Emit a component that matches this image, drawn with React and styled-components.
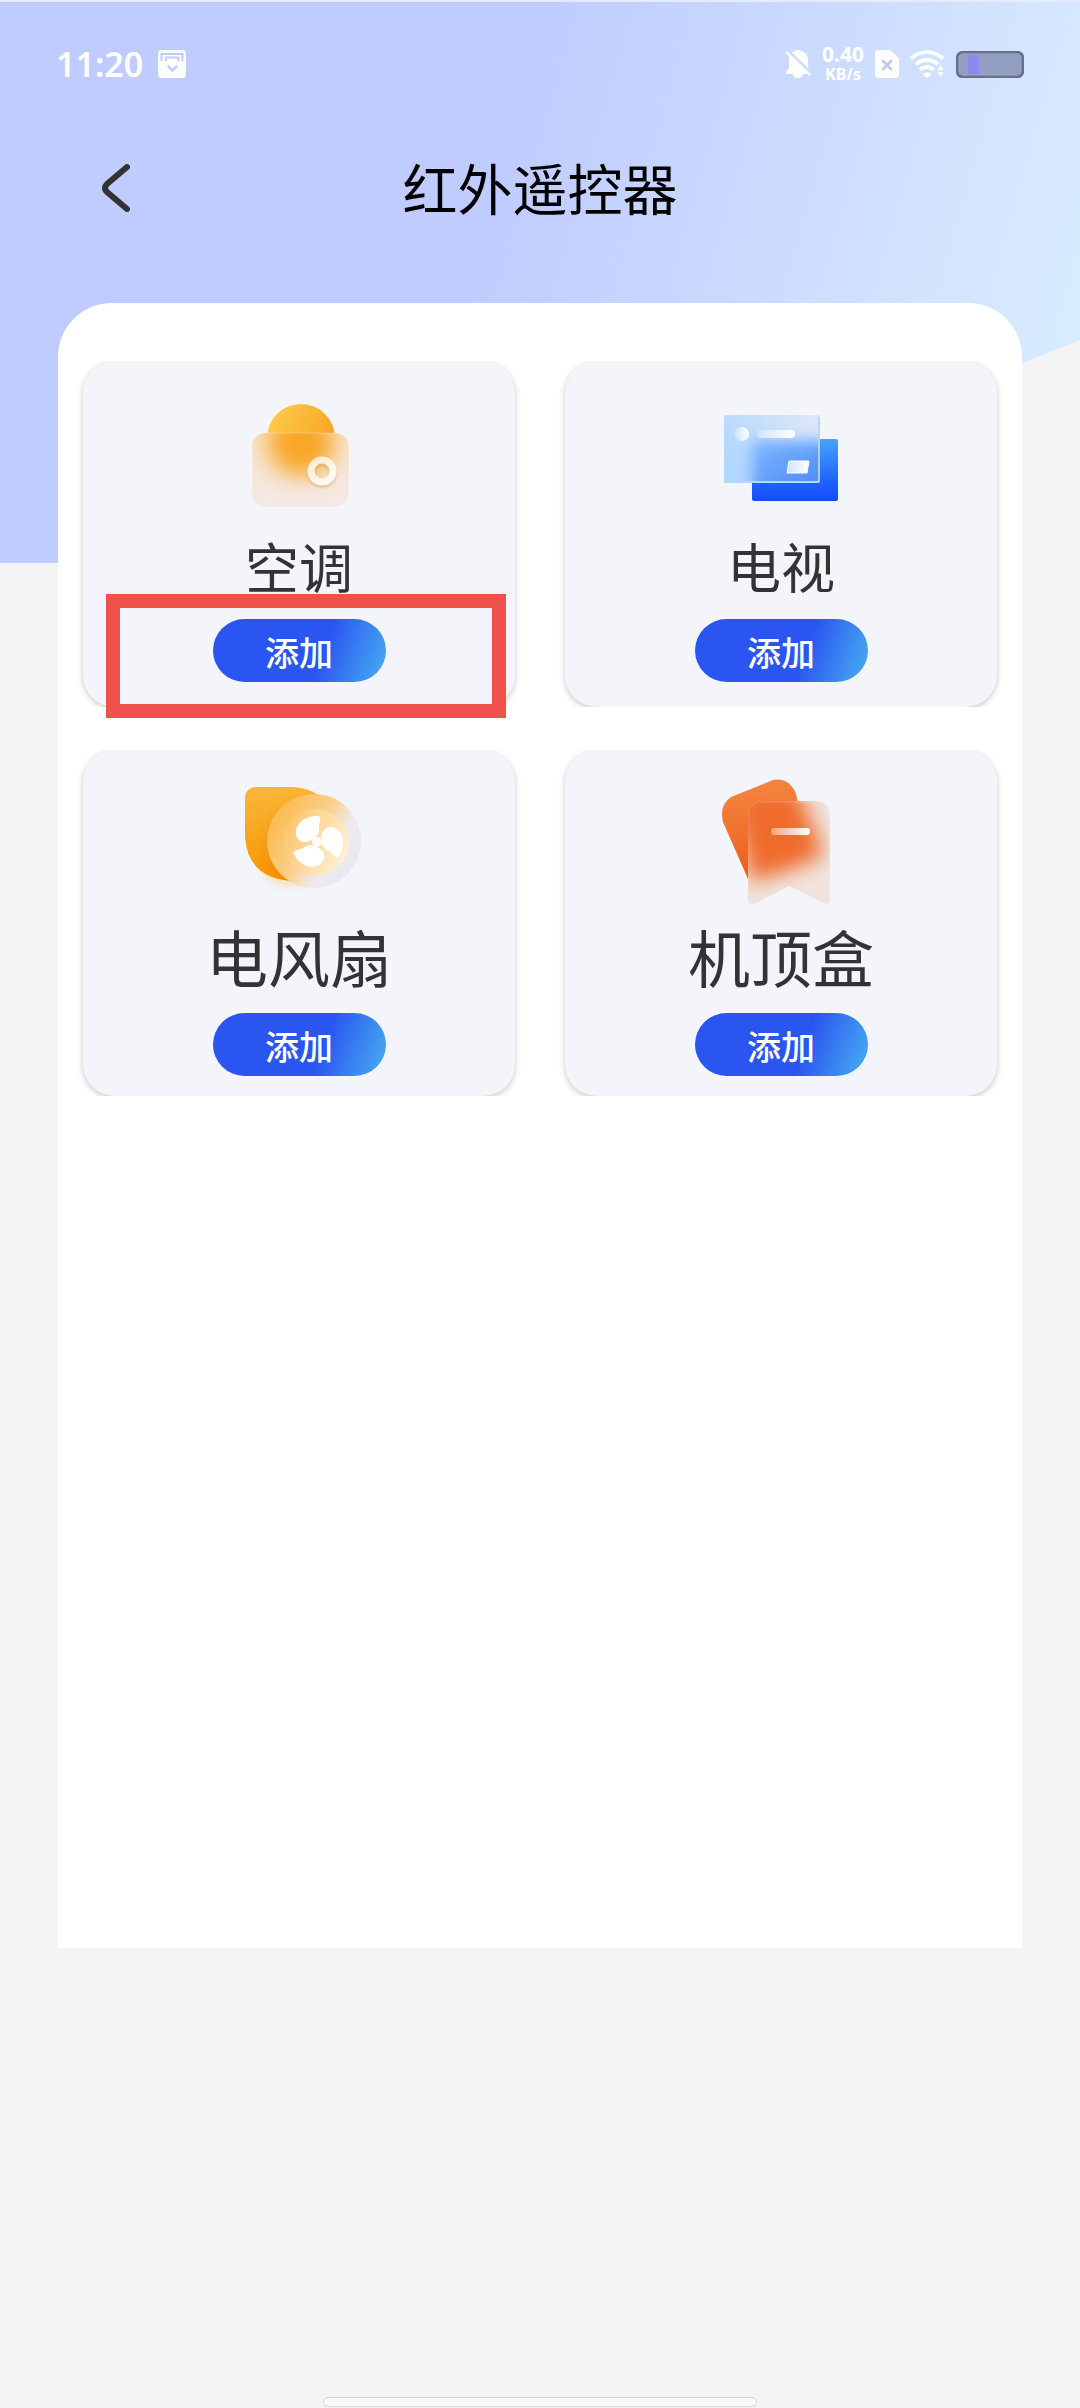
import React from "react";
import styled, { createGlobalStyle } from "styled-components";

const Global = createGlobalStyle`
  * { box-sizing: border-box; }
  body { margin: 0; background: #f4f4f4; }
  button { font-family: inherit; border: 0; padding: 0; cursor: pointer; }
`;

const Screen = styled.div`
  position: relative;
  display: flex;
  flex-direction: column;
  min-height: 100vh;
  overflow: hidden;
  font-family: "Noto Sans", "Noto Sans CJK SC", sans-serif;
  background: #f4f4f4;
`;

const Backdrop = styled.svg`
  position: absolute;
  top: 0;
  left: 0;
  width: 100%;
  height: 565px;
`;

const StatusBar = styled.div`
  position: relative;
  display: flex;
  align-items: center;
  justify-content: space-between;
  height: 128px;
  padding: 0 56px;
  color: #fff;
`;

const StatusGroup = styled.div`
  display: flex;
  align-items: center;
  gap: ${(p) => p.$gap}px;
`;

const Clock = styled.time`
  font-size: 34px;
  font-weight: 600;
  line-height: 40px;
`;

const Speed = styled.div`
  display: flex;
  flex-direction: column;
  align-items: center;
  font-size: 21px;
  font-weight: 700;
  line-height: 20px;
`;

const SpeedUnit = styled.span`
  font-size: 16px;
`;

const Header = styled.header`
  position: relative;
  display: grid;
  grid-template-columns: 118px 1fr 118px;
  align-items: center;
  height: 120px;
  margin-bottom: 55px;
`;

const BackButton = styled.button`
  display: flex;
  justify-content: flex-end;
  align-items: center;
  width: 144px;
  height: 80px;
  padding-right: 14px;
  background: none;
`;

const Title = styled.h1`
  margin: 0;
  padding-top: 2px;
  color: #000;
  font-size: 55px;
  font-weight: 400;
  line-height: 72px;
  text-align: center;
`;

const Panel = styled.main`
  position: relative;
  min-height: 1645px;
  margin: 0 58px;
  padding-top: 58px;
  background: #fff;
  border-radius: 54px 54px 0 0;
`;

const DeviceGrid = styled.ul`
  display: grid;
  grid-template-columns: 1fr 1fr;
  row-gap: 43px;
  margin: 0;
  padding: 0;
  list-style: none;
`;

const DeviceCell = styled.li`
  position: relative;
`;

const CardClip = styled.div`
  padding: 0 25px;
  overflow: hidden;
`;

const Card = styled.article`
  display: flex;
  flex-direction: column;
  align-items: center;
  height: 346px;
  padding-top: 20px;
  border-radius: 32px;
  background: #f3f5fb;
  box-shadow: 0 2px 6px rgba(0, 0, 0, 0.22);
`;

const DeviceArt = styled.svg`
  display: block;
  flex: none;
  width: 150px;
  height: 150px;
`;

const DeviceName = styled.h2`
  margin: 0 0 16px;
  padding-top: 2px;
  color: #333;
  font-size: ${(p) => (p.$large ? 62 : 54)}px;
  font-weight: 400;
  line-height: ${(p) => (p.$large ? 75 : 70)}px;
`;

const AddButton = styled.button`
  width: 173px;
  height: 63px;
  padding-top: 4px;
  border-radius: 32px;
  background: linear-gradient(110deg, #2a55f0 62%, #45a6f2 96%);
  color: #fff;
  font-size: 34px;
  font-weight: 500;
  line-height: 58px;
`;

const Highlight = styled.div`
  position: absolute;
  top: 233px;
  right: 34px;
  left: 48px;
  height: 124px;
  border: 14px solid #f0524b;
  pointer-events: none;
`;

const HomeIndicator = styled.div`
  width: 434px;
  height: 10px;
  margin: auto auto 1px;
  border: 1px solid #d8d8d8;
  border-radius: 5px;
  background: #fafafa;
`;

function Wave() {
  return (
    <Backdrop viewBox="0 0 1080 565" preserveAspectRatio="none" aria-hidden="true">
      <defs>
        <linearGradient id="sky" gradientUnits="userSpaceOnUse" x1="480" y1="240" x2="1050" y2="400">
          <stop offset="0" stopColor="#c0ccff" />
          <stop offset="1" stopColor="#d8ecff" />
        </linearGradient>
      </defs>
      <path d="M0 0H1080V340C850 430 640 563 60 563H0Z" fill="url(#sky)" />
      <path d="M0 0H1080V2H0Z" fill="#e6ecff" />
    </Backdrop>
  );
}

function MailIcon() {
  return (
    <svg width="28" height="28" viewBox="0 0 28 28" aria-hidden="true">
      <rect width="28" height="28" rx="4" fill="#fff" />
      <path d="M3.5 11V4H24.500V11M8 11V7.500H20.500V11" fill="none" stroke="#c0ccff" strokeWidth="2" />
      <path d="M10.500 16.500L14.500 20.500L18.500 16.500" fill="none" stroke="#c0ccff" strokeWidth="2.500" strokeLinecap="round" strokeLinejoin="round" />
    </svg>
  );
}

function MutedBell() {
  return (
    <svg width="26" height="30" viewBox="0 0 26 30" aria-hidden="true">
      <path d="M13 1a3 3 0 0 1 3 1c5 1 7 5 7 10v6l2 5v2H1v-2l3-4v-7c0-5 2-9 6-10a3 3 0 0 1 3-1zM8 25h10a5 4 0 0 1-10 0z" fill="#fff" />
      <path d="M1 0L27 25" stroke="#cddbff" strokeWidth="3" />
      <path d="M1 3L25 26" stroke="#fff" strokeWidth="2.400" />
    </svg>
  );
}

function SimOff() {
  return (
    <svg width="24" height="28" viewBox="0 0 24 28" aria-hidden="true">
      <path d="M4 0H15L24 8V24a4 4 0 0 1-4 4H4a4 4 0 0 1-4-4V4a4 4 0 0 1 4-4z" fill="#fff" />
      <path d="M8 11L16 19M16 11L8 19" stroke="#bccde8" strokeWidth="2.600" strokeLinecap="round" />
    </svg>
  );
}

function Wifi() {
  return (
    <svg width="35" height="28" viewBox="0 0 35 28" aria-hidden="true">
      <g fill="none" stroke="#fff" strokeWidth="3.800">
        <path d="M1 8.500C10 0 24 0 33 8.500" />
        <path d="M6 14.500C12 8.500 22 8.500 28 14.500" />
        <path d="M10 20C14 16 20 16 24 20" />
      </g>
      <path d="M12.500 24C15 22 19 22 21.500 24L17 28ZM27.500 20L30.500 15L33.500 20ZM27.500 22L30.500 27L33.500 22Z" fill="#fff" />
    </svg>
  );
}

function Battery() {
  return (
    <svg width="68" height="27" viewBox="0 0 68 27" aria-hidden="true">
      <rect x="1" y="1" width="66" height="25" rx="6" fill="#929fc0" stroke="#667089" strokeWidth="2.500" />
      <rect x="12" y="4" width="11" height="19" rx="2" fill="#8d88ee" />
    </svg>
  );
}

function AirConditionerArt() {
  return (
    <DeviceArt viewBox="0 0 150 150" aria-hidden="true">
      <defs>
        <linearGradient id="acSun" x1="0" y1="0" x2="1" y2="0.600">
          <stop offset="0" stopColor="#fdd050" />
          <stop offset="1" stopColor="#f9a01f" />
        </linearGradient>
        <linearGradient id="acBox" x1="0" y1="0" x2="0" y2="1">
          <stop offset="0" stopColor="#f8e4ca" />
          <stop offset="1" stopColor="#f3e9e6" />
        </linearGradient>
        <linearGradient id="acRing" x1="0" y1="0" x2="1" y2="1">
          <stop offset="0" stopColor="#fdebd0" />
          <stop offset="1" stopColor="#fffdfa" />
        </linearGradient>
        <filter id="acBlur" x="-50%" y="-50%" width="200%" height="200%" colorInterpolationFilters="sRGB"><feGaussianBlur stdDeviation="11" /></filter>
        <filter id="acShade" x="-50%" y="-50%" width="200%" height="200%"><feDropShadow dx="0" dy="2" stdDeviation="1.500" floodColor="#c98a3c" floodOpacity="0.450" /></filter>
        <clipPath id="acClip"><rect x="28" y="52" width="97" height="74" rx="13" /></clipPath>
      </defs>
      <circle cx="77" cy="57" r="34" fill="url(#acSun)" />
      <rect x="28" y="52" width="97" height="74" rx="13" fill="url(#acBox)" />
      <g clipPath="url(#acClip)">
        <circle cx="77" cy="62" r="33" fill="#f9a628" filter="url(#acBlur)" />
      </g>
      <rect x="28" y="52" width="97" height="74" rx="13" fill="none" stroke="#fff" strokeOpacity="0.250" />
      <circle cx="98" cy="90" r="11" fill="none" stroke="url(#acRing)" strokeWidth="7" filter="url(#acShade)" />
    </DeviceArt>
  );
}

function TelevisionArt() {
  return (
    <DeviceArt viewBox="0 0 150 150" aria-hidden="true">
      <defs>
        <linearGradient id="tvBack" x1="0" y1="0" x2="0" y2="1">
          <stop offset="0" stopColor="#48a3fc" />
          <stop offset="0.700" stopColor="#1e62fd" />
          <stop offset="1" stopColor="#144bfa" />
        </linearGradient>
        <linearGradient id="tvFront" x1="0" y1="0.500" x2="1" y2="0">
          <stop offset="0" stopColor="#b2d7ff" />
          <stop offset="1" stopColor="#e0e8f8" />
        </linearGradient>
        <linearGradient id="tvShine" x1="0" y1="0" x2="1" y2="0">
          <stop offset="0" stopColor="#cfe4ff" />
          <stop offset="1" stopColor="#fff" />
        </linearGradient>
        <linearGradient id="tvGlow" x1="0" y1="0" x2="0.600" y2="0.700">
          <stop offset="0" stopColor="#7db8ff" />
          <stop offset="1" stopColor="#5590fa" />
        </linearGradient>
        <filter id="tvBlur" x="-40%" y="-40%" width="180%" height="180%" colorInterpolationFilters="sRGB"><feGaussianBlur stdDeviation="7" /></filter>
        <clipPath id="tvClip"><rect x="18" y="34" width="96" height="68" rx="2" /></clipPath>
      </defs>
      <rect x="46" y="58" width="86" height="62" rx="2" fill="url(#tvBack)" />
      <rect x="18" y="34" width="96" height="68" rx="2" fill="url(#tvFront)" />
      <g clipPath="url(#tvClip)">
        <rect x="46" y="60" width="86" height="62" fill="url(#tvGlow)" filter="url(#tvBlur)" />
      </g>
      <path d="M18 101H111a2 2 0 0 0 2-2V36" fill="none" stroke="#b4d8ff" strokeWidth="1.800" />
      <circle cx="36" cy="53" r="7" fill="url(#tvShine)" />
      <rect x="51" y="49" width="38" height="8" rx="4" fill="url(#tvShine)" />
      <path d="M83 80H103L101 92H81Z" fill="url(#tvShine)" stroke="#fff" strokeWidth="1" strokeLinejoin="round" />
    </DeviceArt>
  );
}

function FanArt() {
  return (
    <DeviceArt viewBox="0 0 150 150" aria-hidden="true">
      <defs>
        <linearGradient id="fanLeaf" x1="0.400" y1="0" x2="0.500" y2="1">
          <stop offset="0" stopColor="#fbb638" />
          <stop offset="1" stopColor="#f59300" />
        </linearGradient>
        <linearGradient id="fanDisc" gradientUnits="userSpaceOnUse" x1="54" y1="50" x2="120" y2="90">
          <stop offset="0" stopColor="#fbbd55" />
          <stop offset="0.500" stopColor="#fad08c" />
          <stop offset="0.800" stopColor="#efe9e9" />
          <stop offset="1" stopColor="#ebe9f0" />
        </linearGradient>
        <linearGradient id="fanInner" x1="0" y1="0.300" x2="1" y2="0.700">
          <stop offset="0" stopColor="#fcc468" />
          <stop offset="1" stopColor="#fff1dc" />
        </linearGradient>
        <filter id="fanGlow" x="-50%" y="-50%" width="200%" height="200%" colorInterpolationFilters="sRGB"><feGaussianBlur stdDeviation="5" /></filter>
        <path id="fanBlade" d="M-3 -4C-10 3 -20 1 -21 -8C-22 -20 -10 -27 2 -26C5 -24 2 -19 2 -15C2 -10 2 -7 -3 -4Z" />
        <clipPath id="fanClip"><path d="M33 17H74Q119 19 119 64Q119 111 72 111Q24 110 21 67V29Q21 17 33 17Z" /></clipPath>
      </defs>
      <ellipse cx="66" cy="98" rx="28" ry="17" fill="#ffc36a" opacity="0.500" filter="url(#fanGlow)" />
      <path d="M33 17H68Q84 17 97 27L72 111Q24 110 21 67V29Q21 17 33 17Z" fill="url(#fanLeaf)" />
      <g clipPath="url(#fanClip)"><circle cx="87" cy="75" r="44" fill="#e57e00" opacity="0.500" filter="url(#fanGlow)" /></g>
      <circle cx="90" cy="71" r="47" fill="url(#fanDisc)" />
      <circle cx="92" cy="72" r="33" fill="url(#fanInner)" />
      <g fill="#fff">
        <use href="#fanBlade" transform="translate(93 72)" />
        <use href="#fanBlade" transform="translate(93 72) rotate(120)" />
        <use href="#fanBlade" transform="translate(93 72) rotate(240)" />
        <circle cx="93" cy="72" r="5" />
      </g>
    </DeviceArt>
  );
}

function SetTopBoxArt() {
  return (
    <DeviceArt viewBox="0 0 150 150" aria-hidden="true">
      <defs>
        <linearGradient id="stbBack" x1="0.400" y1="0" x2="0.500" y2="1">
          <stop offset="0" stopColor="#f48641" />
          <stop offset="1" stopColor="#ee5c1a" />
        </linearGradient>
        <linearGradient id="stbLine" x1="0" y1="0" x2="1" y2="0">
          <stop offset="0" stopColor="#f7a479" />
          <stop offset="1" stopColor="#fff" />
        </linearGradient>
        <filter id="stbBlur" x="-50%" y="-50%" width="200%" height="200%" colorInterpolationFilters="sRGB"><feGaussianBlur stdDeviation="10" /></filter>
        <clipPath id="stbClip"><path d="M56 31H112Q124 33 124 46V130Q123 136 117 133L83 116L50 133Q43 136 42 130V46Q43 33 56 31Z" /></clipPath>
      </defs>
      <path d="M25 27L67 10Q83 7 90 24L98 62L42 109L17 52Q13 35 25 27Z" fill="url(#stbBack)" />
      <path d="M56 31H112Q124 33 124 46V130Q123 136 117 133L83 116L50 133Q43 136 42 130V46Q43 33 56 31Z" fill="#f1e3dc" />
      <g clipPath="url(#stbClip)">
        <path d="M25 22L90 14L118 84L95 96L45 112Z" fill="#ef6b2b" filter="url(#stbBlur)" />
      </g>
      <path d="M56 32H112Q123 34 123 46V130" fill="none" stroke="#fff" strokeOpacity="0.250" />
      <rect x="65" y="58" width="39" height="7" rx="3" fill="url(#stbLine)" />
    </DeviceArt>
  );
}

const devices = [
  { name: "空调", Art: AirConditionerArt, highlighted: true },
  { name: "电视", Art: TelevisionArt },
  { name: "电风扇", Art: FanArt, large: true },
  { name: "机顶盒", Art: SetTopBoxArt, large: true },
];

export default function App() {
  return (
    <Screen>
      <Global />
      <Wave />
      <StatusBar>
        <StatusGroup $gap={15}>
          <Clock>11:20</Clock>
          <MailIcon />
        </StatusGroup>
        <StatusGroup $gap={11}>
          <MutedBell />
          <Speed>
            <span>0.40</span>
            <SpeedUnit>KB/s</SpeedUnit>
          </Speed>
          <SimOff />
          <Wifi />
          <Battery />
        </StatusGroup>
      </StatusBar>
      <Header>
        <BackButton aria-label="返回">
          <svg width="28" height="48" viewBox="0 0 28 48" aria-hidden="true">
            <path d="M25 3L5 20Q1 24 5 28L25 45" fill="none" stroke="#333" strokeWidth="6" strokeLinecap="round" strokeLinejoin="round" />
          </svg>
        </BackButton>
        <Title>红外遥控器</Title>
      </Header>
      <Panel>
        <DeviceGrid>
          {devices.map(({ name, Art, large, highlighted }) => (
            <DeviceCell key={name}>
              <CardClip>
                <Card>
                  <Art />
                  <DeviceName $large={large}>{name}</DeviceName>
                  <AddButton aria-label={`添加${name}`}>添加</AddButton>
                </Card>
              </CardClip>
              {highlighted && <Highlight />}
            </DeviceCell>
          ))}
        </DeviceGrid>
      </Panel>
      <HomeIndicator />
    </Screen>
  );
}
